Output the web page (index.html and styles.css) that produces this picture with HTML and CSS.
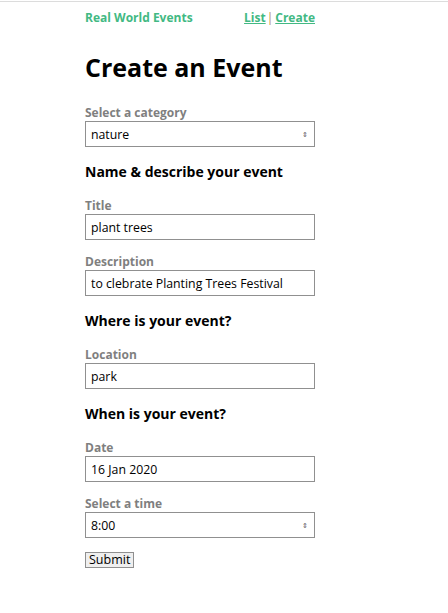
FILE: index.html
```html
<!DOCTYPE html>
<html lang="en">
<head>
	<meta charset="UTF-8">
	<title>Real World Events</title>
	<link rel="stylesheet" href="styles.css">
</head>
<body>
	<div class="topline"></div>
	<div class="page">
		<div class="nav">
			<a class="brand">Real World Events</a>
			<div class="links"><a href="#">List</a><span class="sep">|</span><a href="#">Create</a></div>
		</div>

		<h1>Create an Event</h1>

		<form class="form">
			<div class="field">
				<label>Select a category</label>
				<div class="select"><span>nature</span><span class="arrow">&#8661;</span></div>
			</div>

			<h3>Name &amp; describe your event</h3>
			<div class="field">
				<label>Title</label>
				<input type="text" value="plant trees">
			</div>
			<div class="field">
				<label>Description</label>
				<input type="text" value="to clebrate Planting Trees Festival">
			</div>

			<h3>Where is your event?</h3>
			<div class="field">
				<label>Location</label>
				<input type="text" value="park">
			</div>

			<h3>When is your event?</h3>
			<div class="field">
				<label>Date</label>
				<input type="text" value="16 Jan 2020">
			</div>
			<div class="field">
				<label>Select a time</label>
				<div class="select"><span>8:00</span><span class="arrow">&#8661;</span></div>
			</div>

			<button type="button" class="submit">Submit</button>
		</form>
	</div>
</body>
</html>
```

FILE: styles.css
```css
body{margin:0;font-family:"Open Sans","Noto Sans",sans-serif;color:#000;background:#fff;}
.topline{height:1px;margin-top:1px;background:#dcdcdc;}
.page{margin-left:85px;width:230px;}

.nav{display:flex;align-items:center;height:30px;font-size:12px;font-weight:bold;}
.nav a{color:#42b983;text-decoration:none;}
.brand{width:160px;}
.links{margin-left:auto;}
.links a{text-decoration:underline;}
.links .sep{color:#b5874a;margin:0 2px 0 1px;font-weight:normal;}

h1{margin:19px 0 0;font-size:25px;line-height:32px;font-weight:bold;}

.form{display:flex;flex-direction:column;margin-top:22px;}
.field{display:flex;flex-direction:column;margin-bottom:14px;}
.field label{font-size:12px;font-weight:bold;color:#7f7f7f;line-height:16px;}

input,.select{box-sizing:border-box;height:26px;width:230px;border:1px solid #909090;margin:0;padding:0 5px;font-family:inherit;font-size:12.3px;color:#000;background:#fff;}
.select{display:flex;justify-content:space-between;align-items:center;}
.select .arrow{font-size:7px;color:#555;margin-right:1px;}

h3{margin:1px 0 16px;font-size:14px;line-height:20px;font-weight:bold;}

.submit{margin:0;align-self:flex-start;padding:0 3px;height:16px;font-family:inherit;font-size:12.5px;line-height:14px;border:1px solid #8f8f8f;background:#efefef;color:#000;border-radius:0;}
```
